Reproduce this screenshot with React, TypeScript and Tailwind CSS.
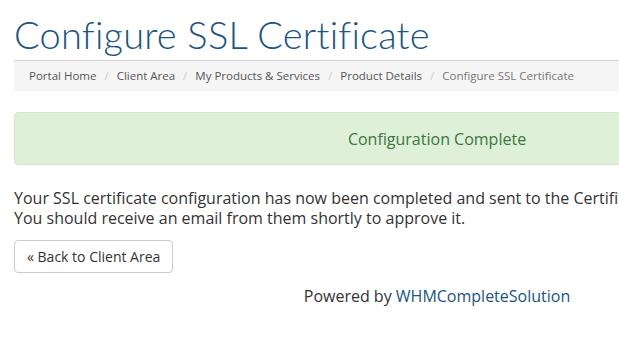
import React from 'react';

const crumbs = ["Portal Home", "Client Area", "My Products & Services", "Product Details"];

const App = () => {
  return (
    <div className="w-[619px] h-[342px] overflow-hidden bg-white font-['Open_Sans',sans-serif] text-[#333]">
      <div className="w-[846px] ml-[14px] pt-[12px]">
        <h1 className="font-['Lato',sans-serif] text-[38px] leading-[44px] text-[#1a5583] font-light tracking-[0.2px]">
          Configure SSL Certificate
        </h1>

        <div className="mt-[4px] h-[31px] border-t border-[#d4d4d4] bg-[#f5f5f5] rounded-b-[4px] pl-[15px] flex items-center text-[11.5px]">
          {crumbs.map((c) => (
            <React.Fragment key={c}>
              <span className="text-[#555]">{c}</span>
              <span className="text-[#ccc] px-[8px]">/</span>
            </React.Fragment>
          ))}
          <span className="text-[#777]">Configure SSL Certificate</span>
        </div>

        {/* success alert */}
        <div className="mt-[21px] h-[53px] bg-[#dff0d8] border border-[#d6e9c6] rounded-[4px] flex items-center justify-center text-[16px] text-[#3c763d]">
          Configuration Complete
        </div>

        <p className="mt-[23px] text-[16px] leading-[20px]">
          Your SSL certificate configuration has now been completed and sent to the Certificate Authority for validation.
          <br />
          You should receive an email from them shortly to approve it.
        </p>

        <button className="mt-[12px] h-[33px] px-[12px] border border-[#ccc] rounded-[4px] bg-white text-[14px] text-[#333]">
          « Back to Client Area
        </button>

        <p className="mt-[11px] text-center text-[16px] leading-[24px]">
          Powered by <a className="text-[#1a5583]">WHMCompleteSolution</a>
        </p>
      </div>
    </div>
  );
};

export default App;
